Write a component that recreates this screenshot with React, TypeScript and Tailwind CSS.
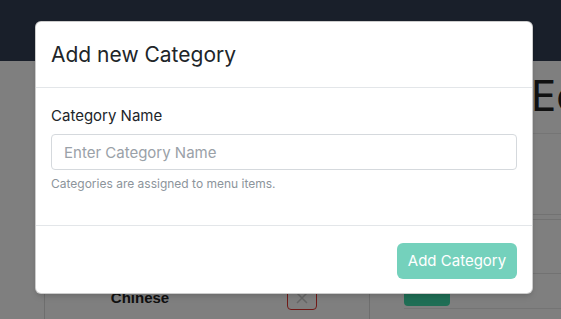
import { useState } from 'react'

const categories = ['Italian', 'Mexican', 'Indian', 'Chinese']

export default function App() {
  const [name, setName] = useState('')

  return (
    <div className="relative w-[561px] h-[319px] overflow-hidden bg-white font-['Inter','Liberation_Sans',sans-serif]">
      {/* 네비게이션 */}
      <nav className="h-[61px] bg-[#323f54]" />

      {/* 배경 페이지 */}
      <div className="flex pl-[44px]">
        {/* 카테고리 목록 */}
        <div className="w-[326px] shrink-0 mt-[19px] border-x border-[#dcdcdc]">
          <div className="h-[50px] border-b border-[#e5e5e5]" />
          {categories.map((c) => (
            <div key={c} className="flex items-center h-[48px] border-b border-[#e5e5e5]">
              <div className="w-[190px] pt-[2px] text-center text-[15px] font-bold text-[#222] font-['Liberation_Sans',sans-serif]">
                {c}
              </div>
              <div className="flex-1 flex justify-center">
                <button className="w-[30px] h-[24px] flex items-center justify-center border border-[#e3342f] rounded text-[#ccc]">
                  <svg width="14" height="14" viewBox="0 0 14 14" fill="none" stroke="currentColor" strokeWidth="1.5">
                    <path d="M2 2l10 10M12 2L2 12" />
                  </svg>
                </button>
              </div>
            </div>
          ))}
        </div>

        {/* 카테고리 편집 */}
        <div className="flex-1 min-w-0 pl-[34px]">
          <div className="h-[73px] pl-[127px] pt-[14px] border-b border-[#eaeaea] whitespace-nowrap text-[42px] leading-none text-[#222]">
            Edit Category
          </div>
          <div className="h-[81px] border-b border-[#e5e5e5]" />
          <div className="h-[55px] mt-[4px] border-y border-[#e5e5e5]" />
          <div className="pt-[10px] pb-[2px] border-b border-[#e8e8e8]">
            <div className="w-[46px] h-[22px] bg-[#3fdcaa] rounded-sm" />
          </div>
        </div>
      </div>

      {/* 오버레이 */}
      <div className="absolute inset-0 bg-black/50" />

      {/* 모달 */}
      <div className="absolute left-[35px] top-[21px] w-[498px] h-[273px] bg-white rounded-md border border-black/20 shadow-md flex flex-col">
        <div className="h-[66px] px-[15px] flex items-center border-b border-[#e3e6e9]">
          <h2 className="text-[21px] text-[#212529] leading-none">Add new Category</h2>
        </div>

        <div className="h-[138px] px-[15px] pt-[19px] border-b border-[#e3e6e9]">
          <label className="block text-[15px] leading-[18px] text-[#212529]">Category Name</label>
          <input
            value={name}
            onChange={(e) => setName(e.target.value)}
            placeholder="Enter Category Name"
            className="mt-[9px] w-full h-[36px] px-[12px] text-[15px] text-[#495057] border border-[#d5d9dd] rounded outline-none placeholder:text-[#9aa1a8]"
          />
          <p className="mt-[7px] text-[12px] leading-[14px] text-[#8c949b]">Categories are assigned to menu items.</p>
        </div>

        <div className="flex-1 px-[15px] pt-[2px] flex items-center justify-end">
          <button className="w-[120px] h-[36px] pt-[2px] rounded-md bg-[#74d1bc] text-white text-[15px]">
            Add Category
          </button>
        </div>
      </div>
    </div>
  )
}
